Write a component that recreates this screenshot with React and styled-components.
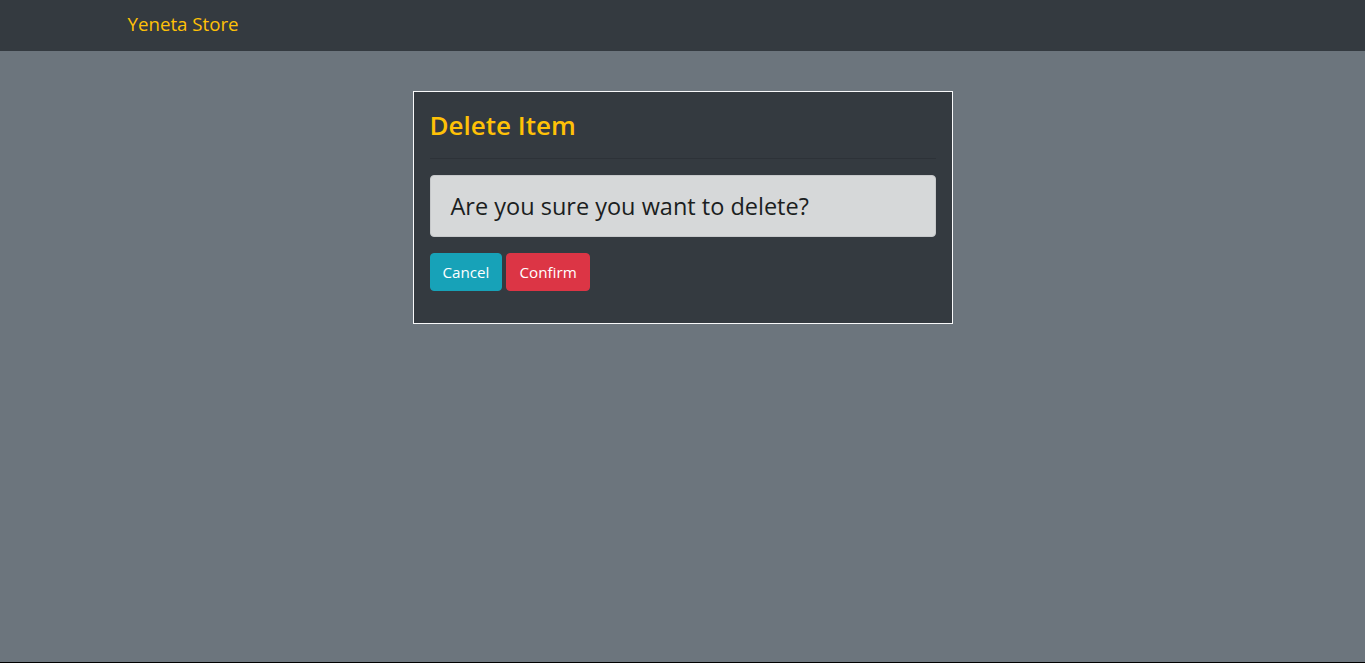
import React from "react";
import styled, { createGlobalStyle } from "styled-components";

const Global = createGlobalStyle`
  html { background: #000; }
  body {
    margin: 0;
    font-family: "Open Sans", "Noto Sans", sans-serif;
    color: #212529;
  }
  * { box-sizing: border-box; }
`;

const Page = styled.div`
  min-height: 662px;
  background: #6c757d;
`;

const NavBar = styled.nav`
  height: 51px;
  background: #343a40;
  display: flex;
  align-items: center;
  padding-bottom: 4px;
`;

const NavContainer = styled.div`
  width: 1140px;
  margin: 0 auto;
  padding: 0 15px;
`;

const Brand = styled.a`
  color: #ffc107;
  font-size: 18.7px;
  text-decoration: none;
  line-height: 30px;
`;

const Card = styled.div`
  width: 540px;
  margin: 40px auto 0;
  background: #343a40;
  border: 1px solid #f8f9fa;
  padding: 16px;
`;

const Title = styled.h3`
  margin: 0 0 8px;
  padding-top: 2px;
  color: #ffc107;
  font-size: 26px;
  font-weight: 600;
  line-height: 31.6px;
`;

const Rule = styled.hr`
  margin: 16px 0;
  border: 0;
  border-top: 1px solid rgba(0, 0, 0, 0.12);
`;

const Alert = styled.div`
  background: #d6d8d9;
  border: 1px solid #c6c8ca;
  border-radius: 4px;
  padding: 12px 20px;
  margin-bottom: 16px;
  color: #1b1e21;
  font-size: 23.5px;
  font-weight: 500;
  line-height: 36px;
`;

const Actions = styled.div`
  display: flex;
  gap: 4px;
  margin-bottom: 16px;
`;

const Button = styled.button`
  height: 38px;
  padding: 0 12px;
  border: 1px solid ${(p) => p.$bg};
  background: ${(p) => p.$bg};
  color: #fff;
  border-radius: 4px;
  font-family: inherit;
  font-size: 15.2px;
  line-height: 24px;
  cursor: pointer;
`;

export default function App() {
  return (
    <Page>
      <Global />
      <NavBar>
        <NavContainer>
          <Brand href="#">Yeneta Store</Brand>
        </NavContainer>
      </NavBar>
      <Card>
        <Title>Delete Item</Title>
        <Rule />
        <Alert>Are you sure you want to delete?</Alert>
        <Actions>
          <Button $bg="#17a2b8">Cancel</Button>
          <Button $bg="#dc3545">Confirm</Button>
        </Actions>
      </Card>
    </Page>
  );
}
